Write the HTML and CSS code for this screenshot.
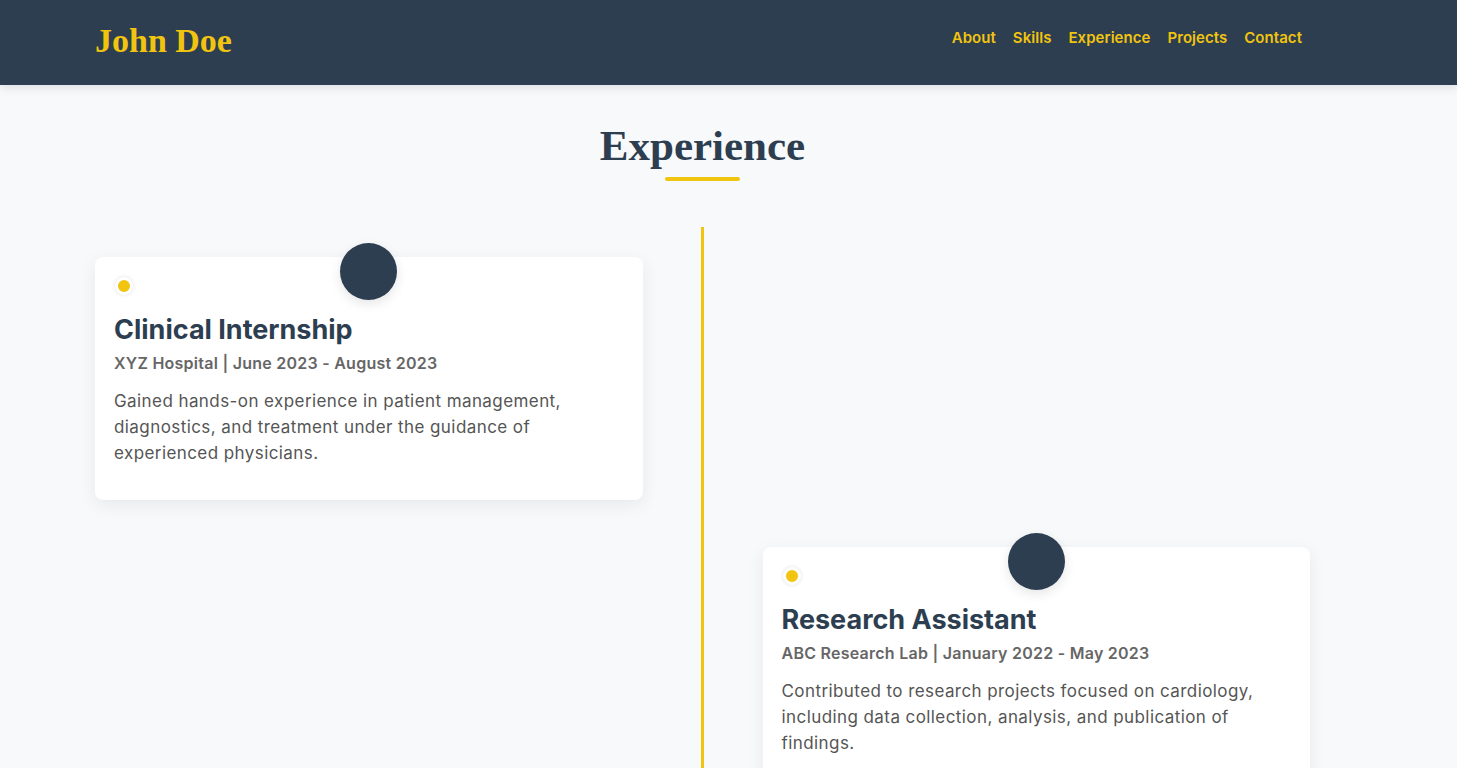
FILE: index.html
```html
<!DOCTYPE html>
<html lang="en">
<head>
<meta charset="utf-8">
<title>John Doe - Experience</title>
<link rel="stylesheet" href="styles.css">
</head>
<body>
<header class="site-header">
  <div class="header-inner">
    <a class="logo" href="#">John Doe</a>
    <nav class="nav">
      <a href="#about">About</a>
      <a href="#skills">Skills</a>
      <a href="#experience">Experience</a>
      <a href="#projects">Projects</a>
      <a href="#contact">Contact</a>
    </nav>
  </div>
</header>
<main class="section" id="experience">
  <div class="section-head">
    <h2 class="section-title">Experience</h2>
    <span class="title-bar"></span>
  </div>
  <div class="timeline">
    <div class="timeline-item left">
      <div class="card">
        <span class="pin"></span>
        <span class="dot"></span>
        <h3 class="card-title">Clinical Internship</h3>
        <p class="card-meta">XYZ Hospital | June 2023 - August 2023</p>
        <p class="card-text">Gained hands-on experience in patient management, diagnostics, and treatment under the guidance of experienced physicians.</p>
      </div>
    </div>
    <div class="timeline-item right">
      <div class="card">
        <span class="pin"></span>
        <span class="dot"></span>
        <h3 class="card-title">Research Assistant</h3>
        <p class="card-meta">ABC Research Lab | January 2022 - May 2023</p>
        <p class="card-text">Contributed to research projects focused on cardiology, including data collection, analysis, and publication of findings.</p>
      </div>
    </div>
  </div>
</main>
</body>
</html>
```
FILE: styles.css
```css
* {
  box-sizing: border-box;
}

html, body {
  margin: 0;
  padding: 0;
}

body {
  background: #f8f9fa;
  font-family: "Inter", "Open Sans", sans-serif;
  color: #333;
  overflow: hidden;
}

.site-header {
  background: #2c3e50;
  height: 85px;
  box-shadow: 0 2px 10px rgba(0, 0, 0, 0.12);
  position: relative;
  z-index: 2;
}

.header-inner {
  width: 1215px;
  margin-left: 95px;
  height: 100%;
  display: flex;
  align-items: center;
  justify-content: space-between;
  padding-right: 8px;
  padding-bottom: 6px;
}

.logo {
  font-family: "Liberation Serif", serif;
  font-weight: 700;
  font-size: 34px;
  color: #f1c40f;
  text-decoration: none;
  margin-top: 2px;
}

.nav {
  display: flex;
  gap: 17px;
  margin-top: -4px;
}

.nav a {
  color: #f1c40f;
  text-decoration: none;
  font-weight: 600;
  font-size: 15px;
  letter-spacing: 0.05px;
}

.section {
  width: 1215px;
  margin-left: 95px;
  padding-top: 36px;
}

.section-head {
  display: flex;
  flex-direction: column;
  align-items: center;
}

.section-title {
  margin: 0;
  font-family: "Liberation Serif", serif;
  font-weight: 700;
  font-size: 43px;
  line-height: 50px;
  color: #2c3e50;
}

.title-bar {
  display: block;
  width: 75px;
  height: 4px;
  border-radius: 2px;
  background: #f1c40f;
  margin-top: 6px;
}

.timeline {
  position: relative;
  margin-top: 46px;
  padding-top: 30px;
  padding-bottom: 40px;
}

.timeline::before {
  content: "";
  position: absolute;
  top: 0;
  bottom: 0;
  left: calc(50% - 1.5px);
  width: 3px;
  background: #f1c40f;
}

.timeline-item {
  width: 50%;
}

.timeline-item.left {
  padding-right: 60px;
}

.timeline-item.right {
  margin-left: 50%;
  padding-left: 60px;
  margin-top: 47px;
}

.card {
  position: relative;
  background: #fff;
  border-radius: 8px;
  padding: 20px 19px 34px;
  box-shadow: 0 5px 18px rgba(0, 0, 0, 0.07);
}

.pin {
  position: absolute;
  top: -14px;
  left: 50%;
  width: 57px;
  height: 57px;
  margin-left: -28.5px;
  border-radius: 50%;
  background: #2c3e50;
  box-shadow: 0 4px 12px rgba(0, 0, 0, 0.1);
}

.dot {
  display: block;
  width: 18px;
  height: 18px;
  border-radius: 50%;
  background: #f1c40f;
  border: 3px solid #fff;
  box-shadow: 0 0 4px rgba(0, 0, 0, 0.12);
  margin-left: 1px;
}

.card-title {
  margin: 17px 0 0;
  font-size: 27px;
  font-weight: 700;
  line-height: 36px;
  color: #2c3e50;
}

.card-meta {
  margin: 2px 0 0;
  font-size: 16px;
  font-weight: 600;
  line-height: 26px;
  letter-spacing: 0.25px;
  color: #666;
}

.card-text {
  margin: 12px 0 0;
  font-size: 17px;
  line-height: 26px;
  letter-spacing: 0.42px;
  color: #555;
}
```
